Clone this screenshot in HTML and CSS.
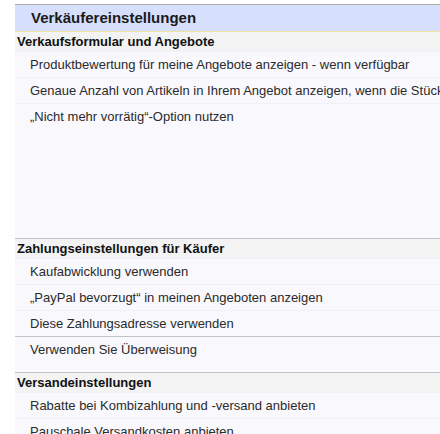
FILE: index.html
```html
<!DOCTYPE html>
<html lang="de">
<head>
    <meta charset="UTF-8">
    <title>Verkäufereinstellungen</title>
    <link rel="stylesheet" href="styles.css">
</head>
<body>
    <div class="prefs">
        <div class="prefsTitle">Verkäufereinstellungen</div>

        <div class="prefsGroup groupFirst">
            <div class="groupHead">Verkaufsformular und Angebote</div>
            <div class="groupBody bodyTall">
                <div class="item">Produktbewertung für meine Angebote anzeigen - wenn verfügbar</div>
                <div class="item">Genaue Anzahl von Artikeln in Ihrem Angebot anzeigen, wenn die Stückzahl größer als 1 ist</div>
                <div class="item">„Nicht mehr vorrätig“-Option nutzen</div>
            </div>
        </div>

        <div class="prefsGroup">
            <div class="groupHead">Zahlungseinstellungen für Käufer</div>
            <div class="groupBody">
                <div class="item">Kaufabwicklung verwenden</div>
                <div class="item">„PayPal bevorzugt“ in meinen Angeboten anzeigen</div>
                <div class="item">Diese Zahlungsadresse verwenden</div>
                <div class="item itemLine itemLast">Verwenden Sie Überweisung</div>
            </div>
        </div>

        <div class="prefsGroup">
            <div class="groupHead">Versandeinstellungen</div>
            <div class="groupBody">
                <div class="item">Rabatte bei Kombizahlung und -versand anbieten</div>
                <div class="item">Pauschale Versandkosten anbieten</div>
            </div>
        </div>
    </div>
</body>
</html>
```

FILE: styles.css
```css
body{
    margin: 0;
    background: #fff;
    font-family: "Liberation Sans", Arial, sans-serif;
}
.prefs{
    margin: 4px 0 0 15px;
    width: 425px;
    overflow: hidden;
    background: #f8f8fd;
}
.prefsTitle{
    height: 26px;
    line-height: 26px;
    padding-left: 16px;
    font-size: 15px;
    font-weight: bold;
    color: #1a1a1a;
    background: #d6dffc;
    border-top: 1px solid #a9a9a9;
    border-bottom: 1px solid #efe4a6;
}
.prefsGroup{
    border-top: 1px solid #c3c3c3;
}
.groupFirst{
    border-top: none;
}
.groupHead{
    height: 19px;
    line-height: 19px;
    padding-left: 2px;
    font-size: 13px;
    font-weight: bold;
    color: #111;
    background: #f3f3f3;
}
.groupBody{
    padding-bottom: 1px;
}
.bodyTall{
    height: 186px;
}
.item{
    height: 25px;
    line-height: 25px;
    padding-left: 15px;
    font-size: 13px;
    color: #2b2b2b;
    white-space: nowrap;
    overflow: hidden;
    border-top: 1px solid #f0f0f7;
}
.itemLine{
    border-top: 1px solid #c3c3c3;
}
.itemLast{
    height: 34px;
}
```
